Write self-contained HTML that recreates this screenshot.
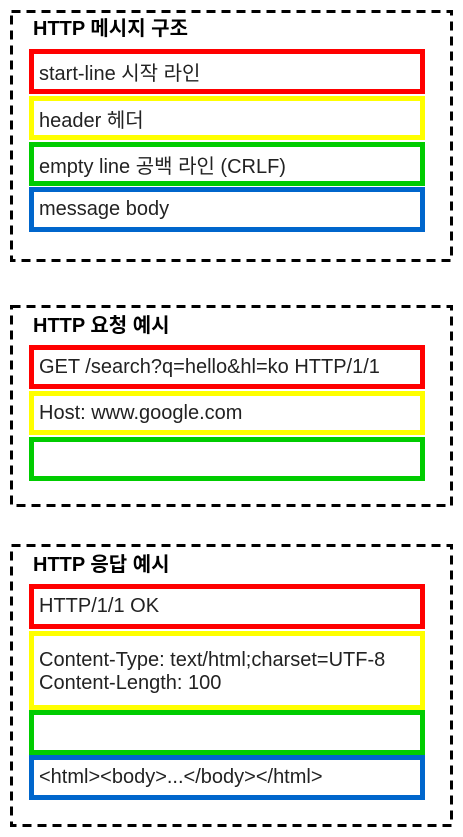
<!DOCTYPE html>
<html><head><meta charset="utf-8"><style>
html,body{margin:0;padding:0;background:#fff;width:463px;height:837px;overflow:hidden;position:relative}
.b{position:absolute;box-sizing:border-box;border:5px solid;left:29px;width:396px;background:#fff;font:20px "Liberation Sans","Noto Sans CJK KR",sans-serif;color:#222;padding-left:5px;display:flex;align-items:center;white-space:nowrap}
.r{border-color:#ff0000}.y{border-color:#ffff00}.g{border-color:#00cc00}.bl{border-color:#0066cc}
.t{position:absolute;left:33px;font:bold 20px "Liberation Sans","Noto Sans CJK KR",sans-serif;color:#000;white-space:nowrap}
svg{position:absolute;left:0;top:0}
</style></head><body>
<svg width="463" height="837">
<g fill="none" stroke="#000" stroke-width="3" stroke-dasharray="9 6">
<rect x="11.5" y="11.5" width="440" height="249"/>
<rect x="11.5" y="306.5" width="440" height="199"/>
<rect x="11.5" y="545.5" width="440" height="280"/>
</g></svg>
<div class="t" style="top:12px">HTTP 메시지 구조</div>
<div class="b r" style="top:49px;height:45px">start-line 시작 라인</div>
<div class="b y" style="top:96px;height:44px">header 헤더</div>
<div class="b g" style="top:142px;height:44px">empty line 공백 라인 (CRLF)</div>
<div class="b bl" style="top:187px;height:45px">message body</div>

<div class="t" style="top:309px">HTTP 요청 예시</div>
<div class="b r" style="top:345px;height:44px">GET /search?q=hello&amp;hl=ko HTTP/1/1</div>
<div class="b y" style="top:391px;height:44px">Host: www.google.com</div>
<div class="b g" style="top:437px;height:44px"></div>

<div class="t" style="top:548px">HTTP 응답 예시</div>
<div class="b r" style="top:584px;height:45px">HTTP/1/1 OK</div>
<div class="b y" style="top:631px;height:79px;line-height:23px;padding-top:2px">Content-Type: text/html;charset=UTF-8<br>Content-Length: 100</div>
<div class="b g" style="top:710px;height:45px"></div>
<div class="b bl" style="top:755px;height:45px">&lt;html&gt;&lt;body&gt;...&lt;/body&gt;&lt;/html&gt;</div>
</body></html>
